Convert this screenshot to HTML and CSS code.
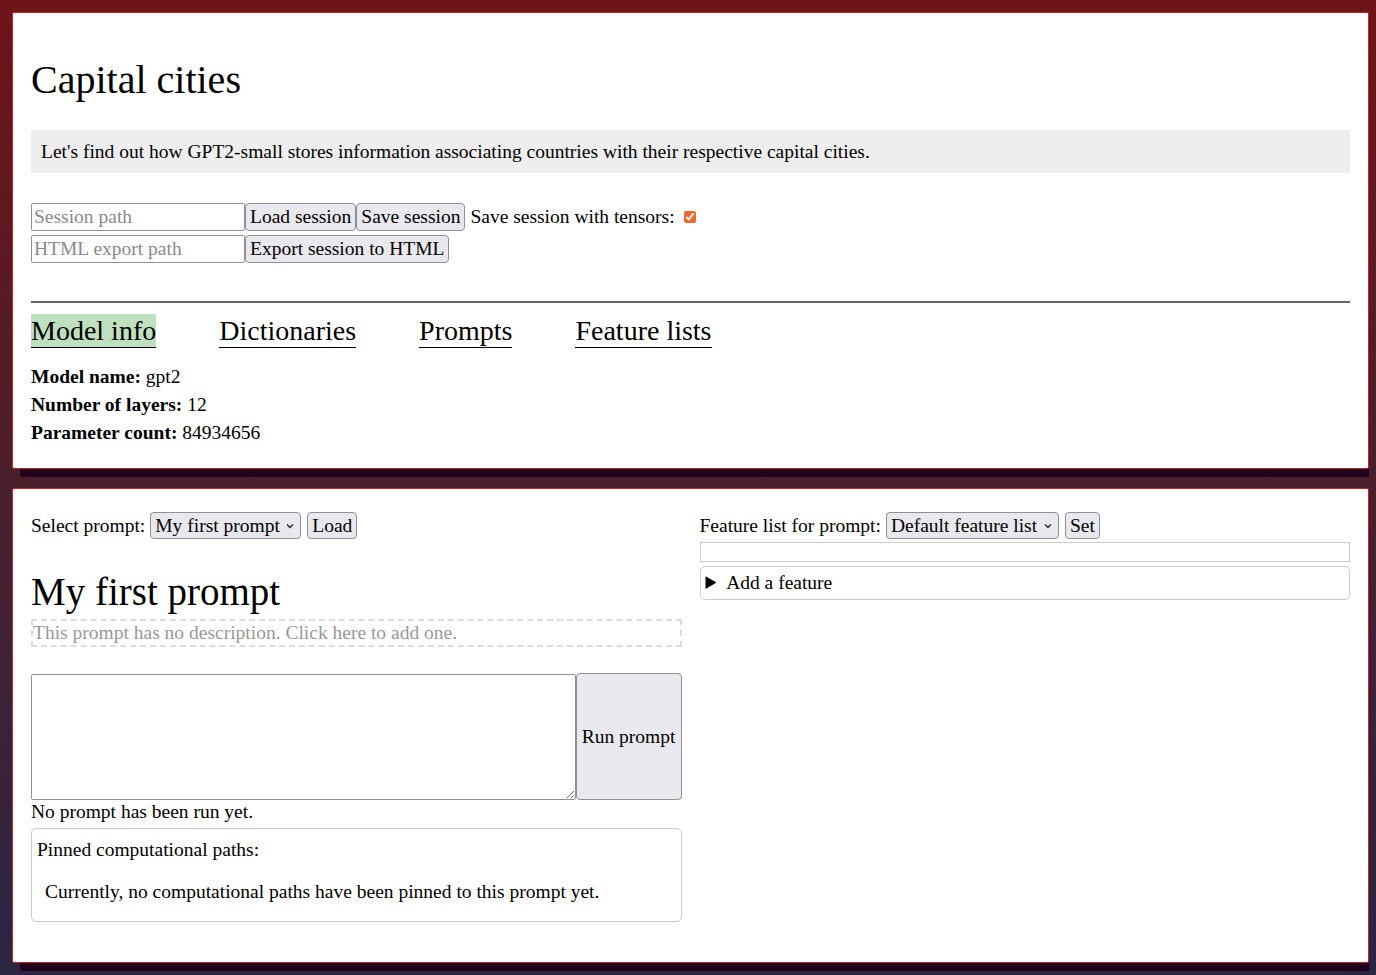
FILE: index.html
```html
<!DOCTYPE html>
<html lang="en">
<head>
<meta charset="utf-8">
<title>Capital cities</title>
<link rel="stylesheet" href="styles.css">
</head>
<body>
<section class="card card-top">
  <h1 class="title">Capital cities</h1>
  <div class="description">Let's find out how GPT2-small stores information associating countries with their respective capital cities.</div>
  <div class="session-row">
    <input class="path-input" type="text" placeholder="Session path">
    <button class="btn">Load session</button>
    <button class="btn">Save session</button>
    <span class="label-text">Save session with tensors:</span>
    <input class="check" type="checkbox" checked>
  </div>
  <div class="session-row">
    <input class="path-input" type="text" placeholder="HTML export path">
    <button class="btn">Export session to HTML</button>
  </div>
  <hr class="rule">
  <nav class="tabs">
    <span class="tab tab-active">Model info</span>
    <span class="tab">Dictionaries</span>
    <span class="tab">Prompts</span>
    <span class="tab">Feature lists</span>
  </nav>
  <div class="info">
    <div><b>Model name:</b> gpt2</div>
    <div><b>Number of layers:</b> 12</div>
    <div><b>Parameter count:</b> 84934656</div>
  </div>
</section>

<section class="card card-bottom">
  <div class="columns">
    <div class="col">
      <div class="ctrl-row">
        <span>Select prompt:</span>
        <span class="select-wrap">
          <select class="select"><option>My first prompt</option></select>
          <svg class="chev" width="8" height="6" viewBox="0 0 8 6"><path d="M1 1.5 L4 4.5 L7 1.5" fill="none" stroke="#222" stroke-width="1.3"/></svg>
        </span>
        <button class="btn">Load</button>
      </div>
      <h2 class="prompt-title">My first prompt</h2>
      <div class="desc-edit">This prompt has no description. Click here to add one.</div>
      <div class="run-row">
        <textarea class="prompt-text"></textarea>
        <button class="btn run-btn">Run prompt</button>
      </div>
      <div class="status">No prompt has been run yet.</div>
      <div class="pinned">
        <div>Pinned computational paths:</div>
        <p class="pinned-note">Currently, no computational paths have been pinned to this prompt yet.</p>
      </div>
    </div>
    <div class="col">
      <div class="ctrl-row">
        <span>Feature list for prompt:</span>
        <span class="select-wrap">
          <select class="select"><option>Default feature list</option></select>
          <svg class="chev" width="8" height="6" viewBox="0 0 8 6"><path d="M1 1.5 L4 4.5 L7 1.5" fill="none" stroke="#222" stroke-width="1.3"/></svg>
        </span>
        <button class="btn">Set</button>
      </div>
      <div class="feature-box"></div>
      <details class="add-feature">
        <summary>Add a feature</summary>
      </details>
    </div>
  </div>
</section>
</body>
</html>
```

FILE: styles.css
```css
html {
  min-height: 100%;
  background: linear-gradient(to bottom, #6f1418 0%, #4a1f2c 50%, #2a2542 100%);
}
body {
  margin: 12px 7px 0 12px;
  padding-bottom: 13px;
  font-family: "Liberation Serif", "DejaVu Serif", serif;
  font-size: 19.5px;
  line-height: 24px;
  color: #000;
}
.card {
  background: #fff;
  border: 1px solid #c0262b;
  border-radius: 2px;
  box-shadow: 8px 8px 0 #21001b;
  padding: 18px;
}
.card-top {
  padding-bottom: 21px;
}
.card-bottom {
  margin-top: 19px;
  padding-bottom: 40px;
}
.title {
  font-size: 40px;
  font-weight: normal;
  line-height: 45px;
  margin: 26px 0 28px;
}
.description {
  background: #eeeeee;
  padding: 10px 10px;
  line-height: 23px;
}
.session-row {
  display: flex;
  align-items: center;
  height: 28px;
  margin-top: 4px;
}
.description + .session-row {
  margin-top: 30px;
}
input, button, select, textarea {
  font-family: inherit;
  font-size: 19.5px;
  color: #000;
}
.path-input {
  box-sizing: border-box;
  width: 214px;
  height: 28px;
  border: 1px solid #8f8f9d;
  border-radius: 2px;
  padding: 0 2px;
  margin: 0;
}
.path-input::placeholder {
  color: #8a8a8a;
}
.btn {
  box-sizing: border-box;
  height: 28px;
  background: #e9e9ed;
  border: 1px solid #8f8f9d;
  border-radius: 4px;
  padding: 0 4px;
  margin: 0;
}
.label-text {
  margin-left: 5px;
}
.check {
  width: 12px;
  height: 12px;
  margin: 0 0 0 9px;
  accent-color: #ea6a33;
}
.rule {
  border: 0;
  border-top: 2px solid #666;
  margin: 38px 0 0;
}
.tabs {
  display: flex;
  gap: 63px;
  margin-top: 11px;
}
.tab {
  font-size: 28px;
  line-height: 33px;
  border-bottom: 1px solid #000;
}
.tab-active {
  background: #bfe0bf;
}
.info {
  margin-top: 15px;
  line-height: 28px;
}
.info b {
  font-weight: bold;
}
.columns {
  display: grid;
  grid-template-columns: 1fr 1fr;
  gap: 18px;
}
.col {
  min-width: 0;
}
.ctrl-row {
  display: flex;
  align-items: center;
  gap: 5px;
  height: 33px;
  padding-top: 2px;
}
.select-wrap {
  position: relative;
  display: inline-flex;
}
.select {
  appearance: none;
  -webkit-appearance: none;
  height: 27px;
  background: #e9e9ed;
  border: 1px solid #8f8f9d;
  border-radius: 4px;
  padding: 0 20px 0 4px;
  margin: 0;
}
.chev {
  position: absolute;
  right: 7px;
  top: 11px;
  pointer-events: none;
}
.ctrl-row .btn {
  height: 27px;
  margin-left: 1px;
}
.prompt-title {
  font-size: 39px;
  font-weight: normal;
  line-height: 45px;
  margin: 27px 0 5px;
}
.desc-edit {
  border: 2px dashed #dcdcdc;
  color: #999;
  line-height: 24px;
  padding: 0;
}
.run-row {
  display: flex;
  margin-top: 26px;
  height: 127px;
}
.prompt-text {
  flex: 1;
  box-sizing: border-box;
  height: 126px;
  margin: 1px 0 0;
  border: 1px solid #8f8f9d;
  border-radius: 2px;
}
.run-btn {
  width: 106px;
  height: 127px;
  padding: 0 4px;
}
.status {
  line-height: 24px;
}
.pinned {
  margin-top: 4px;
  border: 1px solid #cccccc;
  border-radius: 5px;
  padding: 9px 5px 17px;
}
.pinned-note {
  margin: 18px 0 0 8px;
}
.feature-box {
  margin-top: 0;
  height: 18px;
  border: 1px solid #cccccc;
}
.add-feature {
  margin-top: 4px;
  border: 1px solid #cccccc;
  border-radius: 5px;
  padding: 5px 5px;
  line-height: 22px;
}
.add-feature summary {
  cursor: pointer;
}
```
